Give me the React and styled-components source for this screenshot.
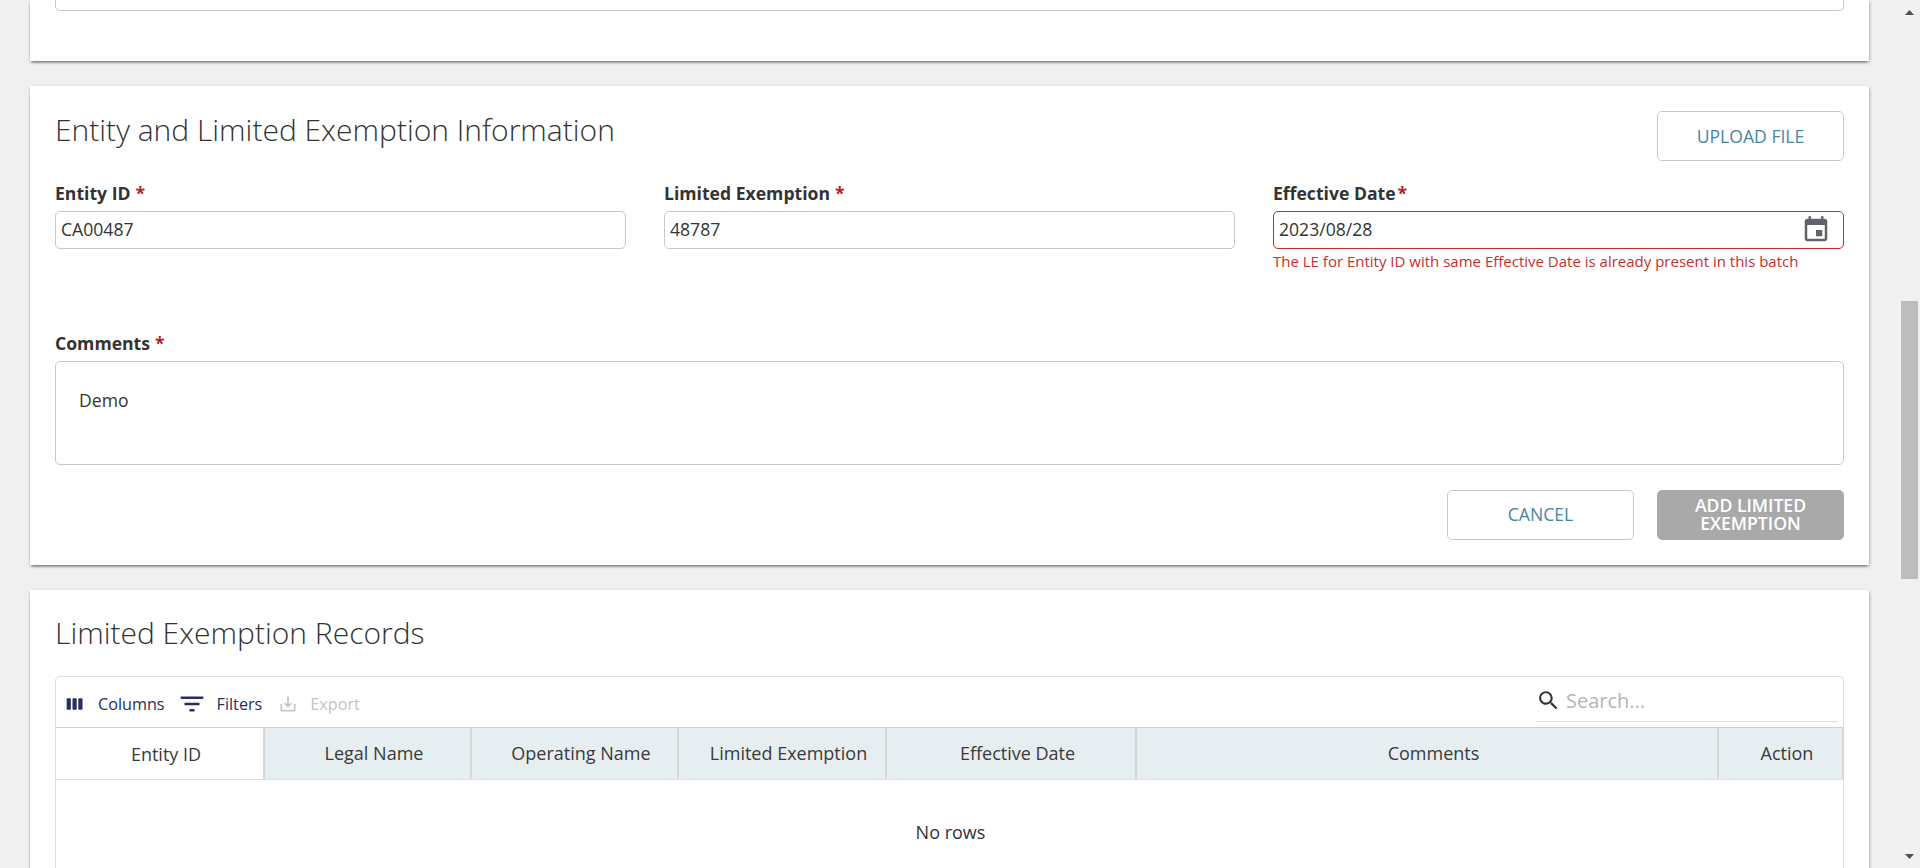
import React from "react";
import styled, { createGlobalStyle } from "styled-components";

const Global = createGlobalStyle`
  html, body { margin: 0; padding: 0; height: 100%; overflow: hidden; background: #f1f1f1; }
  body { font-family: "Open Sans", "Liberation Sans", sans-serif; color: #333; }
  * { box-sizing: border-box; }
`;

const Viewport = styled.div`
  display: flex;
  height: 868px;
  width: 1920px;
  overflow: hidden;
  background: #f0f0f0;
`;
const Main = styled.main`
  flex: 1;
  min-width: 0;
  padding: 0 30px;
  overflow: hidden;
`;
const Card = styled.section`
  background: #fff;
  box-shadow: 0 2px 3px -1px rgba(0, 0, 0, 0.55), 1px 1px 3px rgba(0, 0, 0, 0.16);
  margin-bottom: 25px;
  padding: 25px;
`;
const ClippedCard = styled(Card)`
  height: 61px;
  padding: 0 25px;
`;
const ClippedBox = styled.div`
  height: 11px;
  border: 1px solid #c8c8c8;
  border-top: 0;
  border-radius: 0 0 5px 5px;
`;
const HeaderRow = styled.div`
  display: flex;
  justify-content: space-between;
  align-items: flex-start;
  height: 50px;
`;
const Title = styled.h2`
  margin: 0;
  padding-top: ${(p) => p.$nudge || 0}px;
  font-size: 30px;
  line-height: 36px;
  font-weight: 300;
  color: #333;
`;
const Fields = styled.div`
  display: grid;
  grid-template-columns: repeat(3, 571px);
  column-gap: 38px;
  margin-top: 20px;
  height: 150px;
`;
const Label = styled.label`
  display: block;
  height: 30px;
  font-size: 17.6px;
  line-height: 24px;
  font-weight: 700;
  color: #333;
`;
const Star = styled.span`
  color: #b71c1c;
  margin-left: ${(p) => p.$gap || 5}px;
`;
const InputWrap = styled.div`
  position: relative;
`;
const Input = styled.input`
  display: block;
  width: 100%;
  height: 38px;
  padding: 0 5px 2px;
  border: 1px solid ${(p) => (p.$error ? "#c62828" : "#c8c8c8")};
  border-radius: 5px;
  font: 400 17.6px "Open Sans", sans-serif;
  color: #333;
  outline: none;
`;
const CalendarIcon = styled.svg`
  position: absolute;
  right: 13px;
  top: 4px;
  width: 30px;
  height: 30px;
  fill: #5f6368;
`;
const ErrorText = styled.div`
  margin-top: 2px;
  font-size: 15px;
  line-height: 20px;
  color: #c62f2f;
`;
const TextArea = styled.textarea`
  display: block;
  width: 100%;
  height: 104px;
  padding: 26px 23px 0;
  border: 1px solid #c8c8c8;
  border-radius: 5px;
  font: 400 17.6px/24px "Open Sans", sans-serif;
  color: #333;
  resize: none;
  outline: none;
`;
const Actions = styled.div`
  display: flex;
  justify-content: flex-end;
  gap: 23px;
  margin-top: 25px;
`;
const Button = styled.button`
  width: 187px;
  height: 50px;
  padding: 0 20px ${(p) => (p.$upload ? 0 : 2)}px;
  border-radius: 5px;
  border: 1px solid ${(p) => (p.$disabled ? "#a9a9a9" : "#c8c8c8")};
  background: ${(p) => (p.$disabled ? "#a9a9a9" : "#fff")};
  color: ${(p) => (p.$disabled ? "#fff" : "#45869f")};
  font: ${(p) => (p.$disabled ? 600 : 400)} 17.6px/18px "Open Sans", sans-serif;
  text-transform: uppercase;
`;
const SectionTitle = styled(Title)`
  height: 61px;
`;
const Grid = styled.div`
  border: 1px solid #dfdfdf;
  border-bottom: 0;
  border-radius: 5px 5px 0 0;
  height: 300px;
`;
const GridToolbar = styled.div`
  display: flex;
  justify-content: space-between;
  height: 50px;
  padding: 0 5px 0 9px;
`;
const ToolGroup = styled.div`
  display: flex;
  align-items: center;
  padding-top: 4px;
`;
const Tool = styled.span`
  display: inline-flex;
  align-items: center;
  font-size: 16.2px;
  line-height: 20px;
  color: ${(p) => (p.$disabled ? "#c4c4c4" : "#27305a")};
  margin-right: ${(p) => p.$mr || 0}px;
  svg {
    fill: currentColor;
    width: ${(p) => p.$icon || 20}px;
    height: ${(p) => p.$icon || 20}px;
    margin-right: ${(p) => p.$gap || 10}px;
  }
`;
const SearchBox = styled.div`
  display: flex;
  align-items: center;
  width: 302px;
  height: 45px;
  padding-top: 2px;
  border-bottom: 1px solid #dcdcdc;
  svg {
    width: 25px;
    height: 25px;
    fill: #333;
    margin-right: 3px;
  }
`;
const SearchInput = styled.input`
  flex: 1;
  min-width: 0;
  border: 0;
  outline: none;
  font: 400 20px "Open Sans", sans-serif;
  &::placeholder {
    color: #b5b5b5;
    opacity: 1;
  }
`;
const HeaderCells = styled.div`
  display: flex;
  height: 53px;
  border-top: 1px solid #cdd1d4;
  border-bottom: 1px solid #dcdfe1;
`;
const HeaderCell = styled.div`
  display: flex;
  align-items: center;
  justify-content: center;
  width: ${(p) => p.$w}px;
  flex: none;
  background: ${(p) => (p.$plain ? "#fff" : "#e6eef1")};
  border-right: 2px solid #d6d9db;
  font-size: 18px;
  font-weight: 500;
  color: #3a3a3a;
  padding: 0 0 ${(p) => (p.$plain ? 0 : 2)}px 13px;
`;
const NoRows = styled.div`
  display: flex;
  justify-content: center;
  padding: 40px 0 0 2px;
  font-size: 18px;
  color: #333;
`;
const Scrollbar = styled.div`
  display: flex;
  flex-direction: column;
  flex: none;
  width: 21px;
  height: 868px;
  background: #f1f1f1;
`;
const ArrowButton = styled.div`
  display: flex;
  align-items: center;
  justify-content: center;
  height: 24px;
  flex: none;
  svg {
    width: 9px;
    height: 5px;
    fill: #505050;
  }
`;
const Track = styled.div`
  flex: 1;
  padding: 277px 2px 0;
`;
const Thumb = styled.div`
  height: 278px;
  background: #bdbdbd;
`;

const Ico = ({ d }) => (
  <svg viewBox="0 0 24 24">
    <path d={d} />
  </svg>
);

const columns = [
  ["Entity ID", 209, true],
  ["Legal Name", 207],
  ["Operating Name", 207],
  ["Limited Exemption", 208],
  ["Effective Date", 250],
  ["Comments", 582],
  ["Action", 125],
];

export default function App() {
  return (
    <Viewport>
      <Global />
      <Main>
        <ClippedCard>
          <ClippedBox />
        </ClippedCard>
        <Card>
          <HeaderRow>
            <Title $nudge={1}>Entity and Limited Exemption Information</Title>
            <Button $upload>Upload File</Button>
          </HeaderRow>
          <Fields>
            <div>
              <Label>Entity ID<Star>*</Star></Label>
              <Input readOnly value="CA00487" />
            </div>
            <div>
              <Label>Limited Exemption<Star>*</Star></Label>
              <Input readOnly value="48787" />
            </div>
            <div>
              <Label>Effective Date<Star $gap={2}>*</Star></Label>
              <InputWrap>
                <Input $error readOnly value="2023/08/28" />
                <CalendarIcon viewBox="0 0 24 24">
                  <path d="M17 12h-5v5h5v-5zM16 1v2H8V1H6v2H5c-1.11 0-1.99.9-1.99 2L3 19c0 1.1.89 2 2 2h14c1.1 0 2-.9 2-2V5c0-1.1-.9-2-2-2h-1V1h-2zm3 18H5V8h14v11z" />
                </CalendarIcon>
              </InputWrap>
              <ErrorText>The LE for Entity ID with same Effective Date is already present in this batch</ErrorText>
            </div>
          </Fields>
          <Label>Comments<Star>*</Star></Label>
          <TextArea readOnly value="Demo" />
          <Actions>
            <Button>Cancel</Button>
            <Button $disabled>Add Limited Exemption</Button>
          </Actions>
        </Card>
        <Card>
          <SectionTitle>Limited Exemption Records</SectionTitle>
          <Grid>
            <GridToolbar>
              <ToolGroup>
                <Tool $mr={12} $icon={20} $gap={13}>
                  <Ico d="M6 5H3c-.55 0-1 .45-1 1v12c0 .55.45 1 1 1h3c.55 0 1-.45 1-1V6c0-.55-.45-1-1-1zm14 0h-3c-.55 0-1 .45-1 1v12c0 .55.45 1 1 1h3c.55 0 1-.45 1-1V6c0-.55-.45-1-1-1zm-7 0h-3c-.55 0-1 .45-1 1v12c0 .55.45 1 1 1h3c.55 0 1-.45 1-1V6c0-.55-.45-1-1-1z" />
                  Columns
                </Tool>
                <Tool $mr={16} $icon={30} $gap={10}>
                  <Ico d="M10 18h4v-2h-4v2zM3 6v2h18V6H3zm3 7h12v-2H6v2z" />
                  Filters
                </Tool>
                <Tool $disabled $icon={20} $gap={12}>
                  <Ico d="M19 12v7H5v-7H3v7c0 1.1.9 2 2 2h14c1.1 0 2-.9 2-2v-7h-2zm-6 .67l2.59-2.58L17 11.5l-5 5-5-5 1.41-1.41L11 12.67V3h2z" />
                  Export
                </Tool>
              </ToolGroup>
              <SearchBox>
                <Ico d="M15.5 14h-.79l-.28-.27C15.41 12.59 16 11.11 16 9.5 16 5.91 13.09 3 9.5 3S3 5.91 3 9.5 5.91 16 9.5 16c1.61 0 3.09-.59 4.23-1.57l.27.28v.79l5 4.99L20.49 19l-4.99-5zm-6 0C7.01 14 5 11.99 5 9.5S7.01 5 9.5 5 14 7.01 14 9.5 11.99 14 9.5 14z" />
                <SearchInput readOnly placeholder="Search..." />
              </SearchBox>
            </GridToolbar>
            <HeaderCells>
              {columns.map(([name, w, plain]) => (
                <HeaderCell key={name} $w={w} $plain={plain}>{name}</HeaderCell>
              ))}
            </HeaderCells>
            <NoRows>No rows</NoRows>
          </Grid>
        </Card>
      </Main>
      <Scrollbar>
        <ArrowButton>
          <svg viewBox="0 0 9 5"><path d="M4.5 0L9 5H0z" /></svg>
        </ArrowButton>
        <Track><Thumb /></Track>
        <ArrowButton>
          <svg viewBox="0 0 9 5"><path d="M0 0h9L4.5 5z" /></svg>
        </ArrowButton>
      </Scrollbar>
    </Viewport>
  );
}
